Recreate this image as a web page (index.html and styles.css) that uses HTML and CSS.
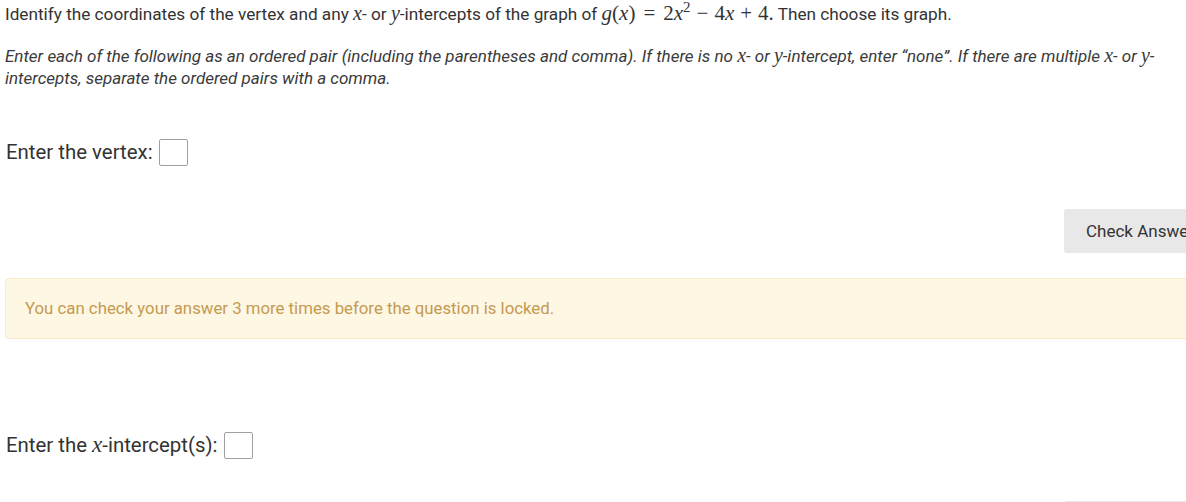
FILE: index.html
```html
<!DOCTYPE html>
<html>
<head>
<meta charset="utf-8">
<link rel="stylesheet" href="styles.css">
</head>
<body>
<div class="page">
  <p class="q1">Identify the coordinates of the vertex and any <span class="mi">x</span>- or <span class="mi">y</span>-intercepts of the graph of <span class="math"><span class="mi">g</span>(<span class="mi">x</span>)<span class="rel">=</span>2<span class="mi">x</span><sup>2</sup><span class="op">−</span>4<span class="mi">x</span><span class="op">+</span>4.</span> Then choose its graph.</p>
  <p class="q2">Enter each of the following as an ordered pair (including the parentheses and comma). If there is no <span class="mi">x</span>- or <span class="mi">y</span>-intercept, enter “none”. If there are multiple <span class="mi">x</span>- or <span class="mi">y</span>-intercepts, separate the ordered pairs with a comma.</p>
  <div class="field field-vertex">
    <span class="label">Enter the vertex:</span>
    <span class="box"></span>
  </div>
  <div class="actions actions-first">
    <button class="check">Check Answer</button>
  </div>
  <div class="alert">You can check your answer 3 more times before the question is locked.</div>
  <div class="field field-x">
    <span class="label">Enter the <span class="mi">x</span>-intercept(s):</span>
    <span class="box"></span>
  </div>
  <div class="actions actions-second">
    <button class="check">Check Answer</button>
  </div>
</div>
</body>
</html>
```
FILE: styles.css
```css
html, body {
  margin: 0;
  padding: 0;
  background: #ffffff;
  overflow: hidden;
}
body {
  font-family: Roboto, "Liberation Sans", sans-serif;
  color: #333333;
}
.page {
  width: 1211px;
  padding-left: 5px;
}
.q1 {
  margin: 3px 0 0 0;
  font-size: 17.2px;
  line-height: 22px;
  color: #333333;
}
.q2 {
  margin: 20px 0 0 0;
  font-size: 17px;
  line-height: 22px;
  font-style: italic;
  color: #3a3a3a;
  width: 1165px;
}
.mi {
  font-family: "Liberation Serif", "DejaVu Serif", serif;
  font-style: italic;
  font-size: 20px;
  line-height: 0;
}
.math {
  font-family: "Liberation Serif", "DejaVu Serif", serif;
  font-size: 21px;
  font-style: normal;
  line-height: 0;
}
.math .mi {
  font-size: 21px;
}
.math sup {
  font-size: 15px;
  line-height: 0;
  vertical-align: 8px;
}
.rel {
  padding: 0 8px;
}
.op {
  padding: 0 6px;
}
.field {
  display: flex;
  align-items: center;
  height: 30px;
  gap: 6px;
}
.field-vertex {
  margin-top: 48px;
}
.field-x {
  margin-top: 91px;
}
.label {
  font-size: 20.4px;
  color: #333333;
  padding-left: 1px;
}
.label .mi {
  font-size: 23px;
}
.box {
  display: inline-block;
  width: 27px;
  height: 25px;
  border: 1px solid #a0a0a0;
  border-radius: 2px;
  background: #ffffff;
}
.actions {
  display: flex;
  justify-content: flex-end;
}
.actions-first {
  margin-top: 42px;
}
.actions-second {
  margin-top: 41px;
}
.check {
  height: 44px;
  padding: 0 22px;
  border: none;
  border-radius: 3px;
  background: #e8e8e8;
  color: #333333;
  font-family: Roboto, "Liberation Sans", sans-serif;
  font-size: 17px;
}
.alert {
  margin-top: 25px;
  padding: 19px 19px;
  line-height: 21px;
  font-size: 16.8px;
  color: #c59a52;
  background: #fdf7e4;
  border: 1px solid #f8ebc9;
  border-radius: 4px;
}
```
